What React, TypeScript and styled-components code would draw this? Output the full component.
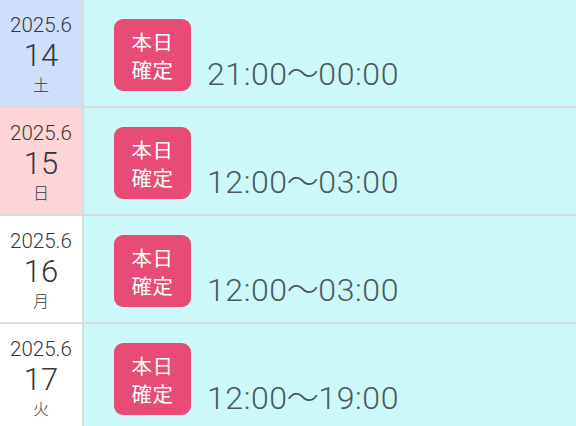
import React from "react";
import styled, { createGlobalStyle } from "styled-components";

const Global = createGlobalStyle`
  html, body { margin: 0; padding: 0; background: #ffffff; }
  body { font-family: Roboto, "Noto Sans CJK JP", sans-serif; overflow: hidden; }
`;

const List = styled.div`
  width: 576px;
  height: 426px;
  overflow: hidden;
  display: flex;
  flex-direction: column;
`;

const Row = styled.div`
  display: grid;
  grid-template-columns: 84px 1fr;
  height: 106px;
  flex: none;
  border-bottom: 2px solid #d9dcdd;
`;

const DateCell = styled.div<{ $bg: string }>`
  background: ${(p) => p.$bg};
  border-right: 2px solid #d9dcdd;
  display: flex;
  flex-direction: column;
  align-items: center;
  padding-top: 14px;
  color: #34373a;
`;

const YearMonth = styled.div`
  font-size: 20.5px;
  font-weight: 300;
  line-height: 22px;
`;

const Day = styled.div`
  font-size: 31px;
  font-weight: 300;
  line-height: 36px;
  margin-top: 2px;
`;

const Weekday = styled.div`
  font-family: "Noto Sans CJK JP", sans-serif;
  font-size: 16px;
  font-weight: 300;
  line-height: 20px;
`;

const Body = styled.div`
  background: #cdf8fa;
  display: flex;
  align-items: flex-start;
  padding: 19px 0 0 30px;
  gap: 16px;
`;

const Badge = styled.div`
  width: 77px;
  height: 72px;
  border-radius: 9px;
  background: #e84b76;
  color: #ffffff;
  font-family: "Noto Sans CJK JP", sans-serif;
  font-size: 20.5px;
  line-height: 28px;
  display: flex;
  flex-direction: column;
  align-items: center;
  justify-content: center;
  letter-spacing: 0.5px;
`;

const Time = styled.div`
  font-family: Roboto, "Noto Sans CJK JP", sans-serif;
  font-size: 32px;
  font-weight: 300;
  line-height: 36px;
  color: #4b585b;
  margin-top: 34px;
  letter-spacing: 0.6px;
`;

const Wave = styled.span`
  font-family: "Noto Sans CJK JP", sans-serif;
  font-weight: 300;
  margin: 0 -1px;
`;

const data = [
  { ym: "2025.6", d: "14", w: "土", bg: "#cfdefb", from: "21:00", to: "00:00" },
  { ym: "2025.6", d: "15", w: "日", bg: "#fdd5d6", from: "12:00", to: "03:00" },
  { ym: "2025.6", d: "16", w: "月", bg: "#ffffff", from: "12:00", to: "03:00" },
  { ym: "2025.6", d: "17", w: "火", bg: "#ffffff", from: "12:00", to: "19:00" },
];

export default function App() {
  return (
    <>
      <Global />
      <List>
        {data.map((r) => (
          <Row key={r.d}>
            <DateCell $bg={r.bg}>
              <YearMonth>{r.ym}</YearMonth>
              <Day>{r.d}</Day>
              <Weekday>{r.w}</Weekday>
            </DateCell>
            <Body>
              <Badge>
                <span>本日</span>
                <span>確定</span>
              </Badge>
              <Time>
                {r.from}
                <Wave>〜</Wave>
                {r.to}
              </Time>
            </Body>
          </Row>
        ))}
      </List>
    </>
  );
}
